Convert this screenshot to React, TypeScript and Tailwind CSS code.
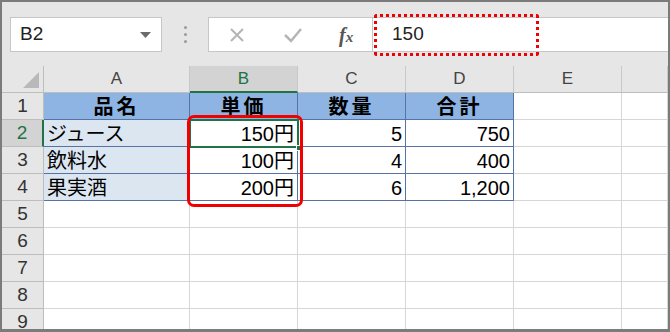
import React from 'react';

const cols = ['A', 'B', 'C', 'D', 'E', ''];

type Cell = { text?: string; align?: 'left' | 'right' | 'center'; kind?: 'head' | 'name' | 'plain' };

const rows: Cell[][] = [
  [
    { text: '品名', align: 'center', kind: 'head' },
    { text: '単価', align: 'center', kind: 'head' },
    { text: '数量', align: 'center', kind: 'head' },
    { text: '合計', align: 'center', kind: 'head' },
  ],
  [
    { text: 'ジュース', align: 'left', kind: 'name' },
    { text: '150円', align: 'right', kind: 'plain' },
    { text: '5', align: 'right', kind: 'plain' },
    { text: '750', align: 'right', kind: 'plain' },
  ],
  [
    { text: '飲料水', align: 'left', kind: 'name' },
    { text: '100円', align: 'right', kind: 'plain' },
    { text: '4', align: 'right', kind: 'plain' },
    { text: '400', align: 'right', kind: 'plain' },
  ],
  [
    { text: '果実酒', align: 'left', kind: 'name' },
    { text: '200円', align: 'right', kind: 'plain' },
    { text: '6', align: 'right', kind: 'plain' },
    { text: '1,200', align: 'right', kind: 'plain' },
  ],
];

const font = "font-['Liberation_Sans','Noto_Sans_CJK_JP',sans-serif]";

function FormulaBar() {
  return (
    <div className="h-[64px] bg-[#e6e6e6] flex items-start pt-[15px] pl-[8px]">
      <div className="w-[152px] h-[35px] bg-white border border-[#c6c6c6] flex items-center justify-between pl-[9px] pr-[10px]">
        <span className={`${font} text-[19px] text-[#222]`}>B2</span>
        <svg width="11" height="6" viewBox="0 0 11 6">
          <path d="M0 0 L11 0 L5.5 6 Z" fill="#6b6b6b" />
        </svg>
      </div>
      <div className="w-[46px] h-[35px] flex flex-col items-center justify-center gap-[4px]">
        <div className="w-[3px] h-[3px] rounded-full bg-[#9a9a9a]" />
        <div className="w-[3px] h-[3px] rounded-full bg-[#9a9a9a]" />
        <div className="w-[3px] h-[3px] rounded-full bg-[#9a9a9a]" />
      </div>
      <div className="w-[164px] h-[35px] bg-white border border-[#c6c6c6] border-r-0 flex items-center">
        <svg className="ml-[20px]" width="16" height="16" viewBox="0 0 16 16">
          <path d="M2 2 L14 14 M14 2 L2 14" stroke="#b5b5b5" strokeWidth="2" />
        </svg>
        <svg className="ml-[38px]" width="20" height="16" viewBox="0 0 20 16">
          <path d="M2 8 L8 14 L18 2" stroke="#b5b5b5" strokeWidth="2.5" fill="none" />
        </svg>
        <span className="ml-[36px] font-['Liberation_Serif',serif] italic font-bold text-[20px] text-[#555] leading-none">
          f<span className="text-[15px]">x</span>
        </span>
      </div>
      <div className="relative flex-1 h-[35px] bg-white border border-[#c6c6c6] border-r-0 flex items-center pl-[19px]">
        <span className={`${font} text-[19px] text-[#222]`}>150</span>
        <div className="absolute left-[1px] top-[-4px] w-[165px] h-[42px] border-[3px] border-dotted border-[#f00000] rounded-[3px]" />
      </div>
    </div>
  );
}

function Grid() {
  return (
    <div className="relative">
      <div className="grid grid-cols-[42px_146px_108px_108px_108px_108px_1fr] auto-rows-[27px] bg-white">
        {/* column header row */}
        <div className="bg-[#e6e6e6] border-r border-b border-[#bdbdbd] flex items-end justify-end pr-[4px] pb-[4px]">
          <svg width="16" height="16" viewBox="0 0 16 16">
            <path d="M16 0 L16 16 L0 16 Z" fill="#b9b9b9" />
          </svg>
        </div>
        {cols.map((c, i) => (
          <div
            key={'h' + i}
            className={`${font} text-[17px] flex items-center justify-center border-r border-[#c8c8c8] ${
              c === 'B'
                ? 'bg-[#d3d3d3] text-[#217346] border-b-2 border-b-[#217346]'
                : 'bg-[#e6e6e6] text-[#444] border-b border-b-[#bdbdbd]'
            }`}
          >
            {c}
          </div>
        ))}
        {Array.from({ length: 9 }).map((_, r) => {
          const data = rows[r];
          return (
            <React.Fragment key={r}>
              <div
                className={`${font} text-[19px] flex items-center justify-center border-b border-[#bdbdbd] ${
                  r === 1
                    ? 'bg-[#d3d3d3] text-[#217346] border-r-2 border-r-[#217346]'
                    : 'bg-[#e6e6e6] text-[#333] border-r border-r-[#bdbdbd]'
                }`}
              >
                {r + 1}
              </div>
              {cols.map((_, c) => {
                const cell = data && c < 4 ? data[c] : undefined;
                if (cell) {
                  const bg = cell.kind === 'head' ? 'bg-[#8db4e2]' : cell.kind === 'name' ? 'bg-[#dce6f1]' : 'bg-white';
                  const just = cell.align === 'center' ? 'justify-center' : cell.align === 'right' ? 'justify-end pr-[3px]' : 'justify-start pl-[3px]';
                  return (
                    <div
                      key={c}
                      className={`${font} ${bg} ${just} flex items-center pt-[2px] border-r border-b border-[#5673a6] text-[20px] text-black ${
                        cell.kind === 'head' ? 'font-bold tracking-[3px]' : ''
                      }`}
                    >
                      {cell.text}
                    </div>
                  );
                }
                return <div key={c} className="border-r border-b border-[#d6d6d6]" />;
              })}
            </React.Fragment>
          );
        })}
      </div>
      {/* active cell B2 */}
      <div className="absolute left-[187px] top-[53px] w-[110px] h-[29px] border-2 border-[#217346]" />
      <div className="absolute left-[294px] top-[79px] w-[6px] h-[6px] bg-[#217346] border border-white" />
      {/* red highlight */}
      <div className="absolute left-[185px] top-[49px] w-[116px] h-[92px] border-[3px] border-[#f00000] rounded-[7px]" />
    </div>
  );
}

export default function App() {
  return (
    <div className="w-[670px] h-[332px] border-2 border-b-[3px] border-[#7b7b7b] overflow-hidden bg-white">
      <FormulaBar />
      <Grid />
    </div>
  );
}
